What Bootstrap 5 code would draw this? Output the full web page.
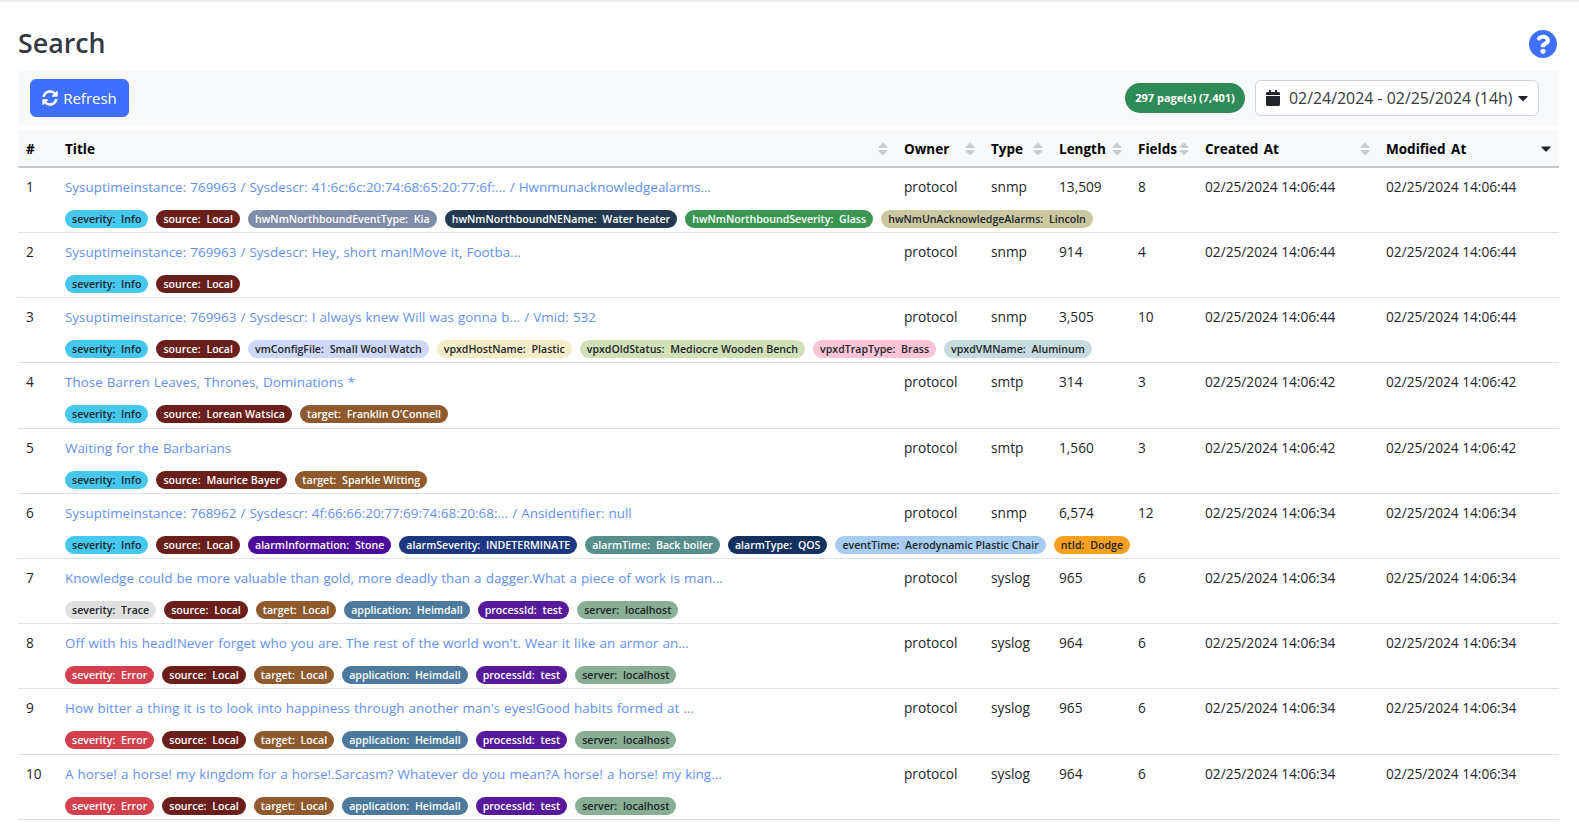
<!DOCTYPE html>
<html lang="en">
<head>
    <meta charset="UTF-8">
    <title>Search</title>
    <link href="https://cdn.jsdelivr.net/npm/bootstrap@5.3.0/dist/css/bootstrap.min.css" rel="stylesheet">
    <style>
        body { font-family: "Open Sans", "Noto Sans", sans-serif; font-size: 13.7px; color: #212529; border-top: 2px solid #eceef0; overflow: hidden; }
        .page-wrap { padding: 0 20px 0 18px; }
        .page-head { height: 69px; padding-top: 21px; }
        .page-title { font-size: 26.8px; font-weight: 600; color: #343a40; margin: 0; line-height: 40px; }
        .help-icon { width: 28px; height: 28px; fill: #3f6fff; margin: 7px 2px 0 0; }
        .tool-bar { background: #f8f9fa; height: 54px; padding: 0 20px 0 12px; margin-bottom: 5px; }
        .refresh-btn { background: #3f6fff; border-color: #3f6fff; height: 38px; width: 99px; padding: 0; font-size: 15px; gap: 5px; }
        .refresh-btn svg { width: 16px; height: 16px; fill: #fff; }
        .refresh-btn span { padding-top: 1px; }
        .count-pill { background: #2e8b57; color: #fff; font-size: 11px; font-weight: 700; height: 30px; line-height: 30px; width: 120px; text-align: center; border-radius: 15px; margin-right: 2px; }
        .range-box { background: #fff; border: 1px solid #ced4da; border-radius: 6px; height: 36px; width: 284px; font-size: 15.9px; padding: 0 10px; color: #343a40; white-space: nowrap; }
        .range-box span { padding: 2px 0 0 9px; flex: 1; }
        .range-box .cal { width: 14px; height: 16px; fill: #212529; flex: none; }
        .range-box .car { width: 10px; height: 16px; fill: #212529; flex: none; }
        .grid-table { table-layout: fixed; width: 100%; margin: 0; --bs-table-bg: transparent; }
        .grid-table th { background: #f8f9fa; color: #000; font-weight: 700; font-size: 13.5px; word-spacing: 2px; height: 37px; padding: 2px 8px 0; vertical-align: middle; border-bottom: 2px solid #c8c9ca; }
        .grid-table th .sorter { width: 10px; height: 16px; fill: #c9cccf; flex: none; }
        .grid-table th .sorter.on { fill: #212529; }
        .grid-table td { padding: 8px 8px 4px; height: 65.2px; vertical-align: top; line-height: 21px; border-bottom: 1px solid #dee2e6; white-space: nowrap; }
        .grid-table td.title-cell { padding-top: 9px; }
        .title-link { display: block; color: #5f91f5; text-decoration: none; font-size: 13.45px; word-spacing: .6px; }
        .tag-row { margin-top: 12px; height: 18px; }
        .tag { height: 18px; line-height: 18px; padding: 0 7px; border-radius: 9px; font-size: 10.6px; font-weight: 600; white-space: pre; word-spacing: .15px; }
        .tag.lt { color: #fff; }
        .tag.dk { color: #212529; }
    </style>
</head>
<body>
<div class="page-wrap">
    <div class="page-head d-flex justify-content-between align-items-start">
        <h1 class="page-title">Search</h1>
        <svg class="help-icon" viewBox="8 8 496 496"><path d="M504 256c0 136.997-111.043 248-248 248S8 392.997 8 256C8 119.083 119.043 8 256 8s248 111.083 248 248zM262.655 90c-54.497 0-89.255 22.957-116.549 63.758-3.536 5.286-2.353 12.415 2.715 16.258l34.699 26.31c5.205 3.947 12.621 3.008 16.665-2.122 17.864-22.658 30.113-35.797 57.303-35.797 20.429 0 45.698 13.148 45.698 32.958 0 14.976-12.363 22.667-32.534 33.976C247.128 238.528 216 254.941 216 296v4c0 6.627 5.373 12 12 12h56c6.627 0 12-5.373 12-12v-1.333c0-28.462 83.186-29.647 83.186-106.667 0-58.002-60.165-102-116.531-102zM256 338c-25.365 0-46 20.635-46 46 0 25.364 20.635 46 46 46s46-20.636 46-46c0-25.365-20.635-46-46-46z"/></svg>
    </div>
    <div class="tool-bar d-flex align-items-center justify-content-between">
        <button class="btn btn-primary refresh-btn d-flex align-items-center justify-content-center">
            <svg viewBox="0 0 512 512"><path d="M370.72 133.28C339.458 104.008 298.888 87.962 255.848 88c-77.458.068-144.328 53.178-162.791 126.85-1.344 5.363-6.122 9.15-11.651 9.15H24.103c-7.498 0-13.194-6.807-11.807-14.176C33.933 94.924 134.813 8 256 8c66.448 0 126.791 26.136 171.315 68.685L463.03 40.97C478.149 25.851 504 36.559 504 57.941V192c0 13.255-10.745 24-24 24H345.941c-21.382 0-32.09-25.851-16.971-40.971l41.75-41.749zM32 296h134.059c21.382 0 32.09 25.851 16.971 40.971l-41.75 41.75c31.262 29.273 71.835 45.319 114.876 45.28 77.418-.07 144.315-53.144 162.787-126.849 1.344-5.363 6.122-9.15 11.651-9.15h57.304c7.498 0 13.194 6.807 11.807 14.176C478.067 417.076 377.187 504 256 504c-66.448 0-126.791-26.136-171.315-68.685L48.97 471.03C33.851 486.149 8 475.441 8 454.059V320c0-13.255 10.745-24 24-24z"/></svg>
            <span>Refresh</span>
        </button>
        <div class="d-flex align-items-center gap-2">
            <div class="count-pill">297 page(s) (7,401)</div>
            <div class="range-box d-flex align-items-center">
                <svg class="cal" viewBox="0 0 448 512"><path d="M12 192h424c6.6 0 12 5.4 12 12v260c0 26.5-21.5 48-48 48H48c-26.5 0-48-21.5-48-48V204c0-6.6 5.4-12 12-12zm436-44v-36c0-26.5-21.5-48-48-48h-48V12c0-6.6-5.4-12-12-12h-40c-6.6 0-12 5.4-12 12v52H160V12c0-6.6-5.4-12-12-12h-40c-6.6 0-12 5.4-12 12v52H48C21.5 64 0 85.5 0 112v36c0 6.6 5.4 12 12 12h424c6.6 0 12-5.4 12-12z"/></svg>
                <span>02/24/2024 - 02/25/2024 (14h)</span>
                <svg class="car" viewBox="0 0 320 512"><path d="M31.3 192h257.3c17.8 0 26.7 21.5 14.1 34.1L174.1 354.8c-7.8 7.8-20.5 7.8-28.3 0L17.2 226.1C4.6 213.5 13.5 192 31.3 192z"/></svg>
            </div>
        </div>
    </div>
    <table class="table grid-table">
        <colgroup>
            <col style="width:39px"><col style="width:839px"><col style="width:87px"><col style="width:68px"><col style="width:79px"><col style="width:67px"><col style="width:181px"><col>
        </colgroup>
        <thead id="grid-head"></thead>
        <tbody id="grid-body"></tbody>
    </table>
</div>
<script src="https://cdn.jsdelivr.net/npm/bootstrap@5.3.0/dist/js/bootstrap.bundle.min.js"></script>
<script>
const SORT_PATH = 'M41 288h238c21.4 0 32.1 25.9 17 41L177 448c-9.4 9.4-24.6 9.4-33.9 0L24 329c-15.1-15.1-4.4-41 17-41zm255-105L177 64c-9.4-9.4-24.6-9.4-33.9 0L24 183c-15.1 15.1-4.4 41 17 41h238c21.4 0 32.1-25.9 17-41z';
const DOWN_PATH = 'M31.3 192h257.3c17.8 0 26.7 21.5 14.1 34.1L174.1 354.8c-7.8 7.8-20.5 7.8-28.3 0L17.2 226.1C4.6 213.5 13.5 192 31.3 192z';

const SEV = {
    Info: ['severity', 'Info', '#45c7ee', 'dk'],
    Trace: ['severity', 'Trace', '#e0e0e0', 'dk'],
    Error: ['severity', 'Error', '#d43f4e', 'lt']
};
const src = v => ['source', v, '#6a1f1b', 'lt'];
const tgt = v => ['target', v, '#8f5b2e', 'lt'];
const SYSLOG = [['application', 'Heimdall', '#4d7a9c', 'lt'], ['processId', 'test', '#561a9a', 'lt'], ['server', 'localhost', '#88ae96', 'dk']];

const rows = [
    [1, 'Sysuptimeinstance: 769963 / Sysdescr: 41:6c:6c:20:74:68:65:20:77:6f:... / Hwnmunacknowledgealarms...', 'snmp', '13,509', 8, '02/25/2024 14:06:44',
        [SEV.Info, src('Local'), ['hwNmNorthboundEventType', 'Kia', '#7f8ca8', 'lt'], ['hwNmNorthboundNEName', 'Water heater', '#22394f', 'lt'], ['hwNmNorthboundSeverity', 'Glass', '#3a9650', 'lt'], ['hwNmUnAcknowledgeAlarms', 'Lincoln', '#c9c8a0', 'dk']]],
    [2, 'Sysuptimeinstance: 769963 / Sysdescr: Hey, short man!Move it, Footba...', 'snmp', '914', 4, '02/25/2024 14:06:44',
        [SEV.Info, src('Local')]],
    [3, 'Sysuptimeinstance: 769963 / Sysdescr: I always knew Will was gonna b... / Vmid: 532', 'snmp', '3,505', 10, '02/25/2024 14:06:44',
        [SEV.Info, src('Local'), ['vmConfigFile', 'Small Wool Watch', '#d0d8fa', 'dk'], ['vpxdHostName', 'Plastic', '#f5edc8', 'dk'], ['vpxdOldStatus', 'Mediocre Wooden Bench', '#d2e0b8', 'dk'], ['vpxdTrapType', 'Brass', '#fcc4d6', 'dk'], ['vpxdVMName', 'Aluminum', '#c5dbdd', 'dk']]],
    [4, 'Those Barren Leaves, Thrones, Dominations *', 'smtp', '314', 3, '02/25/2024 14:06:42',
        [SEV.Info, src('Lorean Watsica'), tgt("Franklin O'Connell")]],
    [5, 'Waiting for the Barbarians', 'smtp', '1,560', 3, '02/25/2024 14:06:42',
        [SEV.Info, src('Maurice Bayer'), tgt('Sparkle Witting')]],
    [6, 'Sysuptimeinstance: 768962 / Sysdescr: 4f:66:66:20:77:69:74:68:20:68:... / Ansidentifier: null', 'snmp', '6,574', 12, '02/25/2024 14:06:34',
        [SEV.Info, src('Local'), ['alarmInformation', 'Stone', '#4c0a9c', 'lt'], ['alarmSeverity', 'INDETERMINATE', '#1c3880', 'lt'], ['alarmTime', 'Back boiler', '#588f8c', 'lt'], ['alarmType', 'QOS', '#14305f', 'lt'], ['eventTime', 'Aerodynamic Plastic Chair', '#a8ccf0', 'dk'], ['ntId', 'Dodge', '#f8a020', 'dk']]],
    [7, 'Knowledge could be more valuable than gold, more deadly than a dagger.What a piece of work is man...', 'syslog', '965', 6, '02/25/2024 14:06:34',
        [SEV.Trace, src('Local'), tgt('Local'), ...SYSLOG]],
    [8, "Off with his head!Never forget who you are. The rest of the world won't. Wear it like an armor an...", 'syslog', '964', 6, '02/25/2024 14:06:34',
        [SEV.Error, src('Local'), tgt('Local'), ...SYSLOG]],
    [9, "How bitter a thing it is to look into happiness through another man's eyes!Good habits formed at ...", 'syslog', '965', 6, '02/25/2024 14:06:34',
        [SEV.Error, src('Local'), tgt('Local'), ...SYSLOG]],
    [10, 'A horse! a horse! my kingdom for a horse!.Sarcasm? Whatever do you mean?A horse! a horse! my king...', 'syslog', '964', 6, '02/25/2024 14:06:34',
        [SEV.Error, src('Local'), tgt('Local'), ...SYSLOG]]
];

const heads = ['#', 'Title', 'Owner', 'Type', 'Length', 'Fields', 'Created At', 'Modified At'];
document.getElementById('grid-head').innerHTML = '<tr>' + heads.map((h, i) => {
    if (i === 0) return `<th>${h}</th>`;
    const last = i === heads.length - 1;
    return `<th><div class="d-flex justify-content-between align-items-center"><span>${h}</span>
        <svg class="sorter ${last ? 'on' : ''}" viewBox="0 ${last ? 144 : 0} 320 ${last ? 256 : 512}"><path d="${last ? DOWN_PATH : SORT_PATH}"/></svg></div></th>`;
}).join('') + '</tr>';

document.getElementById('grid-body').innerHTML = rows.map(r => {
    const tags = r[6].map(t => `<span class="tag ${t[3]}" style="background:${t[2]}">${t[0]}:  ${t[1]}</span>`).join('');
    return `<tr>
        <td>${r[0]}</td>
        <td class="title-cell"><a class="title-link" href="#">${r[1]}</a><div class="tag-row d-flex gap-2">${tags}</div></td>
        <td>protocol</td>
        <td>${r[2]}</td>
        <td>${r[3]}</td>
        <td>${r[4]}</td>
        <td>${r[5]}</td>
        <td>${r[5]}</td>
    </tr>`;
}).join('');
</script>
</body>
</html>
